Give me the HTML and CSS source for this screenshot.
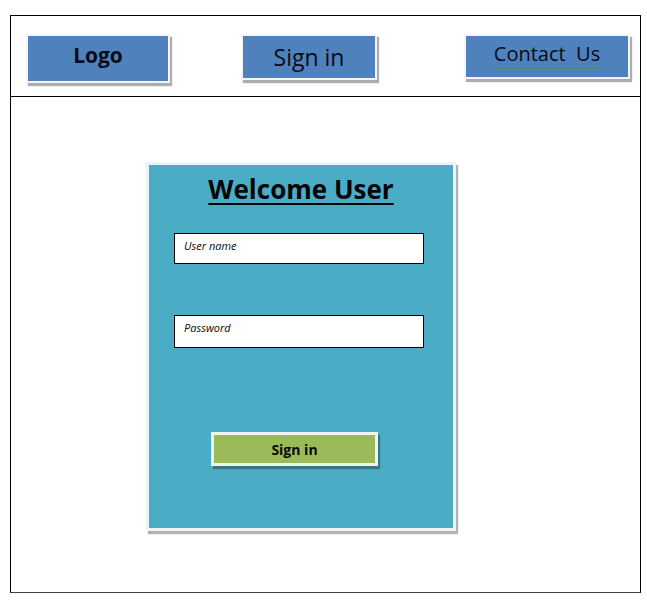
FILE: index.html
```html
<!DOCTYPE html>
<html lang="en">
<head>
<meta charset="utf-8">
<title>Welcome User</title>
<link rel="stylesheet" href="styles.css">
</head>
<body>
<div class="frame">
  <header class="header">
    <div class="nav-btn nav-logo">Logo</div>
    <div class="nav-btn nav-signin">Sign in</div>
    <div class="nav-btn nav-contact"><span class="spell">Contact&nbsp; Us</span></div>
  </header>
  <main class="main">
    <section class="card">
      <h1 class="card-title">Welcome User</h1>
      <div class="field field-user"><span class="placeholder">User name</span></div>
      <div class="field field-pass"><span class="placeholder">Password</span></div>
      <div class="submit">Sign in</div>
    </section>
  </main>
</div>
</body>
</html>
```
FILE: styles.css
```css
html, body {
  margin: 0;
  padding: 0;
  background: #ffffff;
}

body {
  font-family: "Open Sans", "Liberation Sans", sans-serif;
  color: #0b0b12;
}

.frame {
  box-sizing: border-box;
  margin: 15px 0 0 10px;
  width: 631px;
  height: 578px;
  border: 1px solid #000;
  border-bottom-color: #444;
}

.header {
  box-sizing: border-box;
  height: 81px;
  border-bottom: 1px solid #000;
  padding-top: 18px;
  display: flex;
  align-items: flex-start;
}

.nav-btn {
  box-sizing: border-box;
  display: flex;
  align-items: center;
  justify-content: center;
  background: #4f81bd;
  border: 2px solid #f3f5f8;
  box-shadow: 2px 3px 1px rgba(0, 0, 0, 0.32);
  color: #0b0b16;
}

.nav-logo {
  margin-left: 15px;
  width: 144px;
  height: 49px;
  font-size: 21px;
  font-weight: 700;
  padding-bottom: 7px;
}

.nav-signin {
  margin-left: 71px;
  width: 136px;
  height: 46px;
  font-size: 23px;
}

.nav-contact {
  margin-left: 87px;
  width: 166px;
  height: 45px;
  font-size: 20px;
  padding-bottom: 5px;
}

.spell {
  padding-bottom: 2px;
  background-image: linear-gradient(135deg, transparent 35%, #3a9a3a 35%, #3a9a3a 55%, transparent 55%),
                    linear-gradient(45deg, transparent 35%, #3a9a3a 35%, #3a9a3a 55%, transparent 55%);
  background-size: 3px 2px;
  background-position: 0 100%, 1.5px 100%;
  background-repeat: repeat-x;
}

.main {
  padding: 65px 0 0 135px;
}

.card {
  box-sizing: border-box;
  width: 310px;
  height: 369px;
  padding-top: 6px;
  background: #4bacc6;
  border: 3px solid #edf3f6;
  box-shadow: 2px 3px 1px rgba(0, 0, 0, 0.3);
}

.card-title {
  margin: 0;
  font-size: 26px;
  line-height: 36px;
  font-weight: 700;
  text-align: center;
  color: #050505;
  text-decoration: underline;
  text-decoration-thickness: 2px;
  text-underline-offset: 4px;
}

.field {
  box-sizing: border-box;
  margin-left: 25px;
  width: 250px;
  background: #fff;
  border: 1px solid #000;
  padding: 4px 0 0 9px;
}

.field-user {
  margin-top: 26px;
  height: 31px;
}

.field-pass {
  margin-top: 51px;
  height: 33px;
}

.placeholder {
  display: block;
  font-size: 11px;
  line-height: 15px;
  font-style: italic;
  color: #0a0a0a;
}

.submit {
  box-sizing: border-box;
  margin: 84px 0 0 62px;
  width: 167px;
  height: 34px;
  background: #9bbb59;
  border: 3px solid #f1f5f0;
  box-shadow: 2px 3px 1px rgba(0, 0, 0, 0.3);
  display: flex;
  align-items: center;
  justify-content: center;
  font-size: 14px;
  font-weight: 700;
  color: #0a0a0a;
}
```
